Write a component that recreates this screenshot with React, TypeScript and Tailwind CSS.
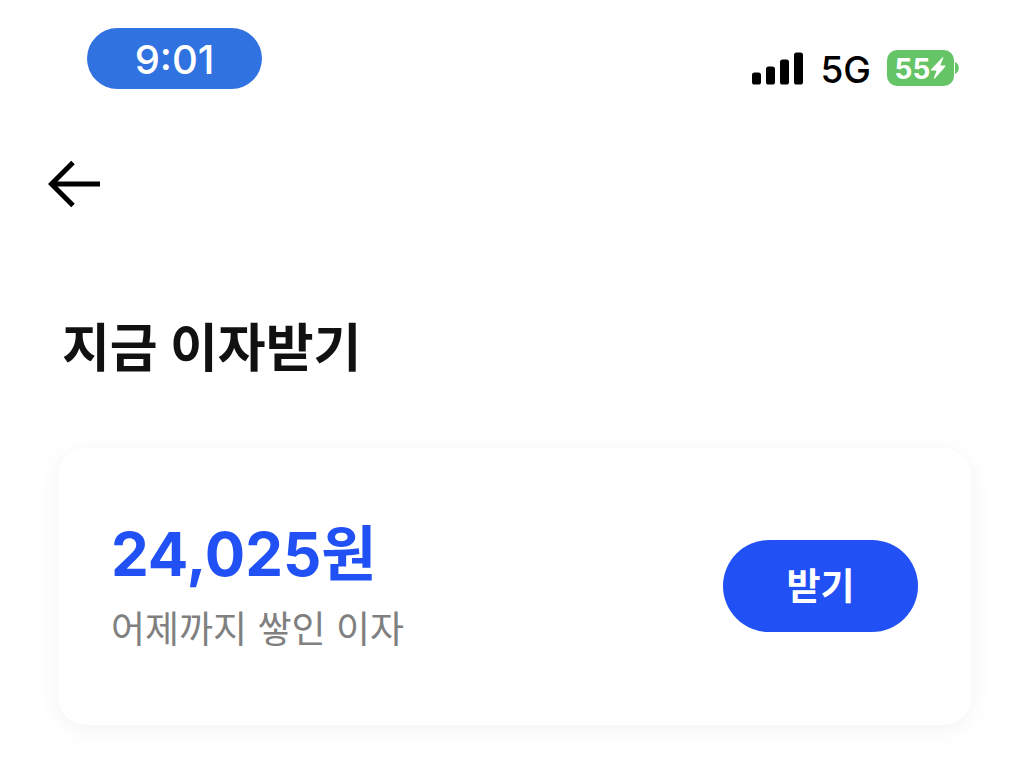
import { useState } from "react";

function SignalBars() {
  return (
    <svg width="52" height="33" viewBox="0 0 52 33" aria-hidden="true">
      <rect x="0" y="20.5" width="9" height="12" rx="2.6" />
      <rect x="14" y="14.5" width="9" height="18" rx="2.6" />
      <rect x="28" y="7.5" width="9" height="25" rx="2.6" />
      <rect x="42" y="0.5" width="9" height="32" rx="2.6" />
    </svg>
  );
}

function Battery({ level }: { level: number }) {
  return (
    <div className="flex items-center gap-px">
      <div className="flex h-9 w-[67px] items-center justify-center rounded-[10px] bg-[#65c466] text-[28px] leading-9 font-bold text-white">
        <span className="pt-0.5">{level}</span>
        <svg width="16" height="24" viewBox="0 0 16 24" fill="currentColor" aria-hidden="true">
          <path d="M12.4 1.4 1.2 13.2c-.5.6-.3 1.3.5 1.3h4.9L3.9 21.900c-.2.8.4 1.100 1 .5L15.200 10.800c.5-.6.3-1.300-.5-1.300H10.200L13.300 2c.3-.8-.3-1.200-.9-.6z" />
        </svg>
      </div>
      <svg width="5" height="12" viewBox="0 0 5 12" aria-hidden="true">
        <path d="M0 0c5 2 5 10 0 12z" fill="#65c466" />
      </svg>
    </div>
  );
}

function StatusBar() {
  return (
    <header className="flex items-start justify-between pt-7 pr-[69px] pl-[87px]">
      <div className="flex h-[61px] w-[175px] items-center justify-center rounded-full bg-[#3072e0] pt-0.5 text-[40px] leading-[60px] font-medium text-white">
        9:01
      </div>
      <div className="mt-5 flex h-10 items-center">
        <SignalBars />
        <span className="mr-4 ml-4 pt-1 text-[37px] leading-10 font-medium">5G</span>
        <Battery level={55} />
      </div>
    </header>
  );
}

export default function App() {
  const [received, setReceived] = useState(false);

  return (
    <div className="min-h-screen bg-white pb-9 font-['Inter','Noto_Sans_CJK_KR',sans-serif] text-black">
      <StatusBar />

      <nav className="mt-[71px] pl-12">
        <button type="button" aria-label="뒤로" className="block">
          <svg width="52" height="48" viewBox="0 0 52 48" fill="none" stroke="currentColor" strokeWidth="5" aria-hidden="true">
            <path d="M52 24H4M25 2.5 3.5 24 25 45.5" />
          </svg>
        </button>
      </nav>

      <main className="mt-[101px] px-[58px]">
        <h1 className="pl-1 text-[52px] leading-[80px] font-bold text-[#111]">지금 이자받기</h1>

        {/* Accrued interest */}
        <section className="mt-[59px] flex items-center justify-between rounded-[28px] bg-white px-[53px] pt-[66px] pb-[67px] shadow-[0_4px_24px_rgba(0,0,0,0.05)]">
          <div>
            <p className="text-[60px] leading-[80px] font-bold text-[#2151f5]">
              {received ? "0원" : "24,025원"}
            </p>
            <p className="mt-2 text-[37px] leading-[56px] text-[#808080]">어제까지 쌓인 이자</p>
          </div>
          <button
            type="button"
            onClick={() => setReceived(true)}
            className="h-[92px] w-[195px] rounded-full bg-[#2151f5] pt-0.5 text-[37px] font-bold text-white"
          >
            받기
          </button>
        </section>
      </main>
    </div>
  );
}
